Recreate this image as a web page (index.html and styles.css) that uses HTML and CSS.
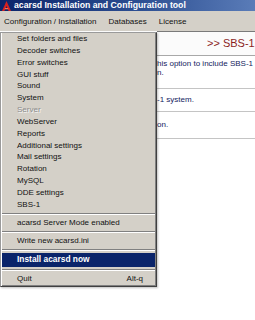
FILE: index.html
```html
<!DOCTYPE html>
<html lang="en">
<head>
    <meta charset="UTF-8">
    <title>acarsd Installation and Configuration tool</title>
    <link rel="stylesheet" href="styles.css">
</head>
<body>
    <div class="window">
        <div class="titlebar">
            <svg class="app-icon" width="9" height="10" viewBox="0 0 9 10">
                <path d="M4.5 0 L9 10 L6.6 10 L4.5 5 L2.4 10 L0 10 Z" fill="#d42020"/>
                <path d="M3 7 L6 7 L6.5 8.2 L2.5 8.2 Z" fill="#ff6a4a"/>
            </svg>
            <span class="title">acarsd Installation and Configuration tool</span>
        </div>

        <div class="menubar">
            <span class="menu-item">Configuration / Installation</span>
            <span class="menu-item">Databases</span>
            <span class="menu-item">License</span>
        </div>

        <div class="workspace">
            <div class="panel">
                <div class="panel-head">&gt;&gt; SBS-1</div>
                <div class="panel-row row-1">his option to include SBS-1<br>n.</div>
                <div class="panel-row row-2">-1 system.</div>
                <div class="panel-row row-3">on.</div>
            </div>

            <!-- open dropdown of "Configuration / Installation" -->
            <div class="dropdown">
                <div class="entry">Set folders and files</div>
                <div class="entry">Decoder switches</div>
                <div class="entry">Error switches</div>
                <div class="entry">GUI stuff</div>
                <div class="entry">Sound</div>
                <div class="entry">System</div>
                <div class="entry disabled">Server</div>
                <div class="entry">WebServer</div>
                <div class="entry">Reports</div>
                <div class="entry">Additional settings</div>
                <div class="entry">Mail settings</div>
                <div class="entry">Rotation</div>
                <div class="entry">MySQL</div>
                <div class="entry">DDE settings</div>
                <div class="entry">SBS-1</div>
                <div class="sep"></div>
                <div class="entry">acarsd Server Mode enabled</div>
                <div class="sep"></div>
                <div class="entry">Write new acarsd.ini</div>
                <div class="sep"></div>
                <div class="entry active">Install acarsd now</div>
                <div class="sep"></div>
                <div class="entry"><span>Quit</span><span class="shortcut">Alt-q</span></div>
            </div>
        </div>
    </div>
</body>
</html>
```

FILE: styles.css
```css
body {
    margin: 0;
    background-color: white;
    font-family: 'Liberation Sans', Arial, sans-serif;
    font-size: 8px;
    color: #1a1a1a;
    overflow: hidden;
}

.window {
    width: 255px;
    height: 320px;
    overflow: hidden;
}

/* ---- title bar ---- */
.titlebar {
    height: 11px;
    display: flex;
    align-items: center;
    padding-left: 2px;
    background: linear-gradient(90deg, #0a246a 0%, #2d4f92 55%, #5a7cb8 100%);
}

.app-icon {
    display: block;
    margin-right: 3px;
}

.title {
    color: white;
    font-weight: bold;
    font-size: 8.7px;
    line-height: 11px;
    white-space: nowrap;
}

/* ---- menu bar ---- */
.menubar {
    height: 20px;
    display: flex;
    align-items: center;
    padding-top: 1px;
    box-sizing: border-box;
    background-color: #d4d0c8;
}

.menu-item {
    padding: 0 5.5px 0 4px;
    white-space: nowrap;
    color: #111;
}

.menu-item + .menu-item {
    padding-left: 6.5px;
}

/* ---- content behind the menu ---- */
.workspace {
    position: relative;
    height: 289px;
}

.panel {
    margin-left: 157px;
    border-top: 1px solid #7a7a7a;
    background-color: white;
}

.panel-head {
    height: 23px;
    line-height: 23px;
    padding-left: 50px;
    font-size: 11px;
    color: #8b1e1e;
    white-space: nowrap;
    background-color: #fbfbfb;
    border-bottom: 1px solid #a8a8a8;
}

.panel-row {
    color: #14235e;
    line-height: 9px;
    white-space: nowrap;
    border-bottom: 1px solid #c4c4c4;
    box-sizing: border-box;
}

.row-1 {
    height: 33px;
    padding-top: 3px;
}

.row-2 {
    height: 23px;
    padding-top: 6px;
}

.row-3 {
    height: 27px;
    padding-top: 8px;
}

/* ---- dropdown ---- */
.dropdown {
    position: absolute;
    top: 1px;
    left: 0;
    width: 157px;
    box-sizing: border-box;
    padding: 0 1px 1px 1px;
    background-color: #d4d0c8;
    border: 1px solid;
    border-color: #9a9a9a #404040 #404040 #9a9a9a;
    box-shadow: inset 1px 0 #fff, inset -1px -1px #808080, 1px 1px 2px rgba(0,0,0,0.25);
}

.entry {
    height: 11.85px;
    line-height: 11.85px;
    padding: 0 12px 0 15px;
    display: flex;
    justify-content: space-between;
    white-space: nowrap;
    color: #111;
}

.entry.disabled {
    color: #8c8c8c;
    text-shadow: 1px 1px 0 #f4f4f4;
}

.entry.active {
    height: 13.35px;
    line-height: 13.35px;
    background-color: #0a246a;
    color: white;
    font-weight: bold;
    font-size: 8.4px;
}

.sep {
    height: 6.3px;
    display: flex;
    align-items: center;
}

.sep::before {
    content: "";
    flex: 1;
    height: 0;
    border-top: 1px solid #808080;
    border-bottom: 1px solid #fff;
}
```
